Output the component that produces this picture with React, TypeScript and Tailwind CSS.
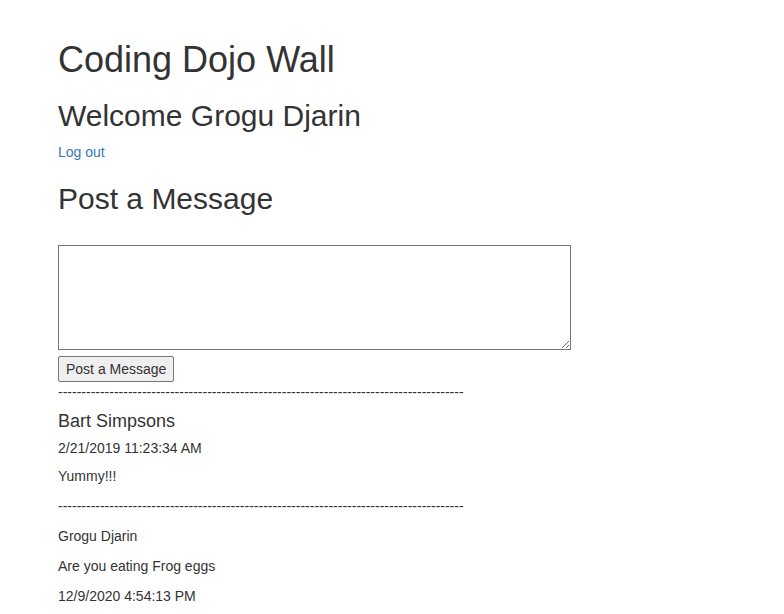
const DASHES = '-'.repeat(87)

export default function App() {
  return (
    <main className="min-h-[614px] bg-white px-[58px] pt-[40px] font-['Liberation_Sans',Arial,sans-serif] text-[14px] leading-[20px] text-[#333]">
      <h1 className="text-[36px] leading-[39.6px] font-normal">Coding Dojo Wall</h1>
      <h2 className="mt-[19px] text-[30px] leading-[33px] font-normal">Welcome Grogu Djarin</h2>
      <a href="#" className="mt-[10px] block w-fit text-[#337ab7]">
        Log out
      </a>

      <h2 className="mt-[20px] text-[30px] leading-[33px] font-normal">Post a Message</h2>

      <form className="mt-[30px]">
        <textarea className="block h-[105px] w-[513px] border border-[#767676] bg-white p-[2px] text-[14px]" />
        <button
          type="button"
          className="mt-[6px] block h-[26px] rounded-[2px] border border-[#767676] bg-[#efefef] px-[7px] text-[14px] leading-[20px] text-[#333]"
        >
          Post a Message
        </button>
      </form>

      <p className="mt-0 whitespace-nowrap">{DASHES}</p>

      <section>
        <h4 className="mt-[10px] mb-[7px] text-[18px] leading-[19.8px] font-normal">Bart Simpsons</h4>
        <p className="mb-[8px]">2/21/2019 11:23:34 AM</p>
        <p className="mb-[10px]">Yummy!!!</p>
      </section>

      <p className="mb-[10px] whitespace-nowrap">{DASHES}</p>

      <section>
        <p className="mb-[10px]">Grogu Djarin</p>
        <p className="mb-[10px]">Are you eating Frog eggs</p>
        <p>12/9/2020 4:54:13 PM</p>
      </section>
    </main>
  )
}
